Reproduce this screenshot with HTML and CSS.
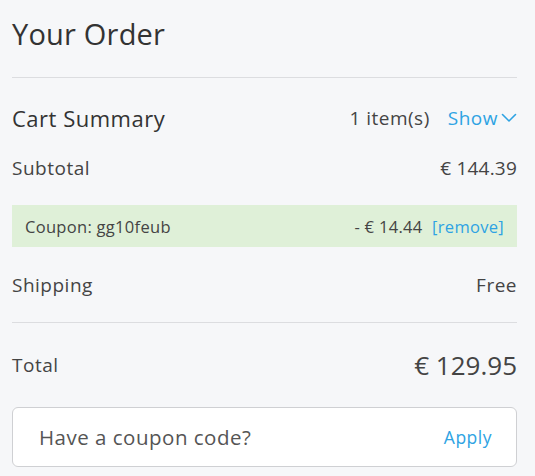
FILE: index.html
```html
<!DOCTYPE html>
<html>
<head>
<meta charset="utf-8">
<link rel="stylesheet" href="styles.css">
</head>
<body>
<div class="order">
  <h1 class="title">Your Order</h1>
  <div class="summary">
    <div class="row head">
      <span class="head-label">Cart Summary</span>
      <span class="head-right">
        <span class="count">1 item(s)</span>
        <a class="show">Show
          <svg class="chev" width="16" height="10" viewBox="0 0 16 10"><path d="M1.5 1.5 L8 8 L14.5 1.5" fill="none" stroke="#2ea3e3" stroke-width="1.6" stroke-linecap="round" stroke-linejoin="round"/></svg>
        </a>
      </span>
    </div>
    <div class="row line">
      <span>Subtotal</span>
      <span class="num">€ 144.39</span>
    </div>
    <div class="coupon">
      <span>Coupon: gg10feub</span>
      <span class="coupon-right">- € 14.44 <a class="remove">[remove]</a></span>
    </div>
    <div class="row line ship">
      <span>Shipping</span>
      <span>Free</span>
    </div>
  </div>
  <div class="row total">
    <span>Total</span>
    <span class="total-amt">€ 129.95</span>
  </div>
  <div class="code-box">
    <span class="placeholder">Have a coupon code?</span>
    <a class="apply">Apply</a>
  </div>
</div>
</body>
</html>
```
FILE: styles.css
```css
html, body {
  margin: 0;
  padding: 0;
  background: #f6f7f9;
}
body {
  font-family: "Open Sans", "Lato", sans-serif;
  font-weight: 400;
  color: #3c3c3c;
  letter-spacing: 0.5px;
}
.order {
  padding: 0 18px 0 12px;
}
.title {
  margin: 0;
  font-weight: 400;
  font-size: 29px;
  letter-spacing: 0.2px;
  line-height: 36px;
  padding-top: 16px;
  padding-bottom: 25px;
  border-bottom: 1px solid #dcdde0;
  color: #333;
}
.summary {
  border-bottom: 1px solid #dcdde0;
}
.row {
  display: flex;
  justify-content: space-between;
  align-items: center;
}
.head {
  height: 50px;
  margin-top: 15px;
}
.head-label {
  font-size: 22px;
  color: #333;
}
.head-right {
  display: flex;
  align-items: center;
  font-size: 19px;
}
.count {
  color: #444;
  margin-right: 18px;
}
.show {
  color: #2ea3e3;
  font-size: 19px;
  display: flex;
  align-items: center;
}
.chev {
  margin-left: 3px;
}
.line {
  font-size: 19px;
  height: 50px;
  color: #444;
}
.num {
  letter-spacing: 0.2px;
}
.coupon {
  background: #dff0d8;
  height: 42px;
  margin-top: 12px;
  display: flex;
  justify-content: space-between;
  align-items: center;
  padding: 0 13px 0 13px;
  font-size: 16.5px;
  letter-spacing: 0.3px;
  color: #444;
}
.remove {
  color: #2ea3e3;
  margin-left: 5px;
}
.ship {
  margin-top: 13px;
  margin-bottom: 12px;
}
.total {
  height: 84px;
  font-size: 19px;
  color: #444;
}
.total-amt {
  font-size: 26px;
  letter-spacing: 0;
}
.code-box {
  background: #fff;
  border: 1px solid #cfd0d3;
  border-radius: 6px;
  height: 58px;
  display: flex;
  justify-content: space-between;
  align-items: center;
  padding: 0 24px 0 26px;
}
.placeholder {
  font-size: 20.5px;
  color: #555;
}
.apply {
  color: #2ea3e3;
  font-size: 17.5px;
}
```
